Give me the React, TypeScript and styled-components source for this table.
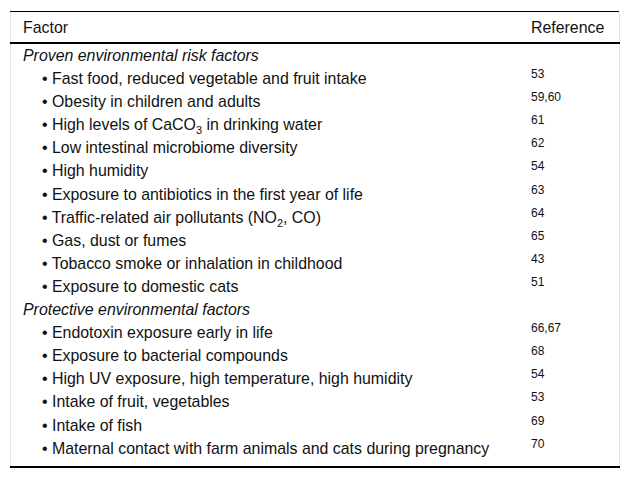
import React from 'react';
import styled, { createGlobalStyle } from 'styled-components';

const GlobalStyle = createGlobalStyle`
  body {
    margin: 0;
    background: #fff;
    font-family: "Liberation Sans", Arial, sans-serif;
    color: #111;
  }
`;

const SWrapper = styled.div`
  padding: 11px 0 0 10px;
  width: 610px;
`;

const STable = styled.table`
  width: 610px;
  border-collapse: collapse;
  border-top: 1px solid #000;
  border-bottom: 2px solid #000;
  border-left: 1px solid #e4e4e4;
  border-right: 1px solid #e4e4e4;
  font-size: 15.9px;
`;

const SHeadCell = styled.th`
  text-align: left;
  font-weight: 400;
  padding: 6px 12px 5px;
  line-height: 19px;
  border-bottom: 2px solid #000;
`;

const SCell = styled.td`
  padding: 2px 12px;
  line-height: 19.1px;
  vertical-align: top;
`;

const SFactorCell = styled(SCell)<{ indent?: boolean }>`
  padding-left: ${(props): string => (props.indent ? '31px' : '12px')};
  font-style: ${(props): string => (props.indent ? 'normal' : 'italic')};
`;

const SRefCell = styled(SCell)`
  width: 76px;
  padding-top: 0;
  font-size: 12px;
  line-height: 14px;
`;

const SLastRow = styled.tr`
  td {
    padding-bottom: 8px;
  }
`;

const SSub = styled.sub`
  font-size: 11px;
  line-height: 0;
`;

interface Item {
  label: React.ReactNode;
  refs: string;
}

interface Group {
  title: string;
  items: Item[];
}

const groups: Group[] = [
  {
    title: 'Proven environmental risk factors',
    items: [
      { label: 'Fast food, reduced vegetable and fruit intake', refs: '53' },
      { label: 'Obesity in children and adults', refs: '59,60' },
      {
        label: (
          <>
            High levels of CaCO<SSub>3</SSub> in drinking water
          </>
        ),
        refs: '61',
      },
      { label: 'Low intestinal microbiome diversity', refs: '62' },
      { label: 'High humidity', refs: '54' },
      { label: 'Exposure to antibiotics in the first year of life', refs: '63' },
      {
        label: (
          <>
            Traffic-related air pollutants (NO<SSub>2</SSub>, CO)
          </>
        ),
        refs: '64',
      },
      { label: 'Gas, dust or fumes', refs: '65' },
      { label: 'Tobacco smoke or inhalation in childhood', refs: '43' },
      { label: 'Exposure to domestic cats', refs: '51' },
    ],
  },
  {
    title: 'Protective environmental factors',
    items: [
      { label: 'Endotoxin exposure early in life', refs: '66,67' },
      { label: 'Exposure to bacterial compounds', refs: '68' },
      { label: 'High UV exposure, high temperature, high humidity', refs: '54' },
      { label: 'Intake of fruit, vegetables', refs: '53' },
      { label: 'Intake of fish', refs: '69' },
      {
        label: 'Maternal contact with farm animals and cats during pregnancy',
        refs: '70',
      },
    ],
  },
];

const App: React.FC = () => {
  return (
    <SWrapper>
      <GlobalStyle />
      <STable>
        <thead>
          <tr>
            <SHeadCell>Factor</SHeadCell>
            <SHeadCell>Reference</SHeadCell>
          </tr>
        </thead>
        <tbody>
          {groups.map((group, gi) => (
            <React.Fragment key={group.title}>
              <tr>
                <SFactorCell>{group.title}</SFactorCell>
                <SCell />
              </tr>
              {group.items.map((item, ii) => {
                const last = gi === groups.length - 1 && ii === group.items.length - 1;
                const Row = last ? SLastRow : 'tr';
                return (
                  <Row key={ii}>
                    <SFactorCell indent>• {item.label}</SFactorCell>
                    <SRefCell>{item.refs}</SRefCell>
                  </Row>
                );
              })}
            </React.Fragment>
          ))}
        </tbody>
      </STable>
    </SWrapper>
  );
};

export default App;
